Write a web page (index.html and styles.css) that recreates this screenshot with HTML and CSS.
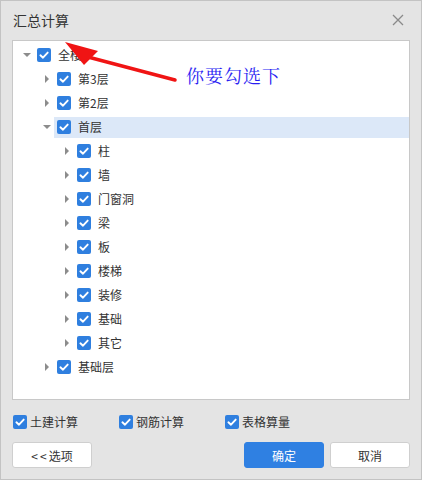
FILE: index.html
```html
<!DOCTYPE html>
<html lang="zh">
<head>
<meta charset="utf-8">
<title>汇总计算</title>
<link rel="stylesheet" href="styles.css">
</head>
<body>
<div class="dialog">
  <div class="header">
    <span class="title">汇总计算</span>
    <svg class="close" width="12" height="12" viewBox="0 0 12 12"><path d="M1 1 L11 11 M11 1 L1 11" stroke="#8a8a8a" stroke-width="1.3" fill="none"/></svg>
  </div>
  <div class="panel">
    <div class="row l0"><span class="tg down"></span><span class="node"><span class="cb"><svg viewBox="0 0 14 14"><path d="M3.4 7.3 L6 9.7 L10.7 4.6" /></svg></span><span class="lb">全楼</span></span></div>
    <div class="row l1"><span class="tg right"></span><span class="node"><span class="cb"><svg viewBox="0 0 14 14"><path d="M3.4 7.3 L6 9.7 L10.7 4.6" /></svg></span><span class="lb">第3层</span></span></div>
    <div class="row l1"><span class="tg right"></span><span class="node"><span class="cb"><svg viewBox="0 0 14 14"><path d="M3.4 7.3 L6 9.7 L10.7 4.6" /></svg></span><span class="lb">第2层</span></span></div>
    <div class="row l1"><span class="tg down"></span><span class="node selected"><span class="cb"><svg viewBox="0 0 14 14"><path d="M3.4 7.3 L6 9.7 L10.7 4.6" /></svg></span><span class="lb">首层</span></span></div>
    <div class="row l2"><span class="tg right"></span><span class="node"><span class="cb"><svg viewBox="0 0 14 14"><path d="M3.4 7.3 L6 9.7 L10.7 4.6" /></svg></span><span class="lb">柱</span></span></div>
    <div class="row l2"><span class="tg right"></span><span class="node"><span class="cb"><svg viewBox="0 0 14 14"><path d="M3.4 7.3 L6 9.7 L10.7 4.6" /></svg></span><span class="lb">墙</span></span></div>
    <div class="row l2"><span class="tg right"></span><span class="node"><span class="cb"><svg viewBox="0 0 14 14"><path d="M3.4 7.3 L6 9.7 L10.7 4.6" /></svg></span><span class="lb">门窗洞</span></span></div>
    <div class="row l2"><span class="tg right"></span><span class="node"><span class="cb"><svg viewBox="0 0 14 14"><path d="M3.4 7.3 L6 9.7 L10.7 4.6" /></svg></span><span class="lb">梁</span></span></div>
    <div class="row l2"><span class="tg right"></span><span class="node"><span class="cb"><svg viewBox="0 0 14 14"><path d="M3.4 7.3 L6 9.7 L10.7 4.6" /></svg></span><span class="lb">板</span></span></div>
    <div class="row l2"><span class="tg right"></span><span class="node"><span class="cb"><svg viewBox="0 0 14 14"><path d="M3.4 7.3 L6 9.7 L10.7 4.6" /></svg></span><span class="lb">楼梯</span></span></div>
    <div class="row l2"><span class="tg right"></span><span class="node"><span class="cb"><svg viewBox="0 0 14 14"><path d="M3.4 7.3 L6 9.7 L10.7 4.6" /></svg></span><span class="lb">装修</span></span></div>
    <div class="row l2"><span class="tg right"></span><span class="node"><span class="cb"><svg viewBox="0 0 14 14"><path d="M3.4 7.3 L6 9.7 L10.7 4.6" /></svg></span><span class="lb">基础</span></span></div>
    <div class="row l2"><span class="tg right"></span><span class="node"><span class="cb"><svg viewBox="0 0 14 14"><path d="M3.4 7.3 L6 9.7 L10.7 4.6" /></svg></span><span class="lb">其它</span></span></div>
    <div class="row l1"><span class="tg right"></span><span class="node"><span class="cb"><svg viewBox="0 0 14 14"><path d="M3.4 7.3 L6 9.7 L10.7 4.6" /></svg></span><span class="lb">基础层</span></span></div>
  </div>
  <div class="opts">
    <label class="opt"><span class="cb"><svg viewBox="0 0 14 14"><path d="M3.4 7.3 L6 9.7 L10.7 4.6" /></svg></span><span class="lb">土建计算</span></label>
    <label class="opt"><span class="cb"><svg viewBox="0 0 14 14"><path d="M3.4 7.3 L6 9.7 L10.7 4.6" /></svg></span><span class="lb">钢筋计算</span></label>
    <label class="opt"><span class="cb"><svg viewBox="0 0 14 14"><path d="M3.4 7.3 L6 9.7 L10.7 4.6" /></svg></span><span class="lb">表格算量</span></label>
  </div>
  <div class="buttons">
    <button class="btn"><span class="chev">&lt;&lt;</span>选项</button>
    <div class="right">
      <button class="btn primary">确定</button>
      <button class="btn">取消</button>
    </div>
  </div>
  <svg class="annot-arrow" width="422" height="100" viewBox="0 0 422 100">
    <line x1="88" y1="57" x2="175" y2="80" stroke="#f01414" stroke-width="3.5" stroke-linecap="round"/>
    <polygon points="65,42 98,51 84,65" fill="#f01414"/>
  </svg>
  <div class="annot-text">你要勾选下</div>
</div>
</body>
</html>
```
FILE: styles.css
```css
* { box-sizing: border-box; }
html, body { margin: 0; padding: 0; background: #e4e4e4; }
body {
  font-family: "Microsoft YaHei", "Noto Sans CJK SC", "Noto Sans", sans-serif;
  font-size: 12px;
  color: #333;
}
.dialog {
  position: relative;
  width: 422px;
  height: 480px;
  background: #e4e4e4;
  border: 1px solid #c3c3c3;
  padding: 0 11px;
  display: flex;
  flex-direction: column;
}
.header {
  height: 39px;
  display: flex;
  align-items: center;
  justify-content: space-between;
  padding-left: 1px;
}
.title {
  font-size: 14px;
  color: #333;
  line-height: 20px;
  margin-top: -2px;
}
.close { margin-right: 6px; margin-top: -1px; }
.panel {
  height: 360px;
  background: #fff;
  border: 1px solid #c8c8c8;
  padding-top: 2px;
  padding-left: 7px;
}
.row {
  height: 24px;
  display: flex;
  align-items: center;
}
.row.l1 { padding-left: 20px; }
.row.l2 { padding-left: 40px; }
.tg {
  width: 14px;
  height: 24px;
  flex: none;
  position: relative;
}
.tg::after {
  content: "";
  position: absolute;
  width: 0; height: 0;
}
.tg.right::after {
  left: 5px; top: 8px;
  border-left: 4px solid #8c8c8c;
  border-top: 4px solid transparent;
  border-bottom: 4px solid transparent;
}
.tg.down::after {
  left: 3px; top: 10px;
  border-top: 4px solid #8c8c8c;
  border-left: 4px solid transparent;
  border-right: 4px solid transparent;
}
.node {
  flex: 1;
  height: 21px;
  display: flex;
  align-items: center;
  padding-left: 3px;
}
.node.selected { background: #dce8f8; }
.cb {
  width: 14px;
  height: 14px;
  border-radius: 2px;
  background: #2f7fdf;
  display: inline-flex;
  flex: none;
}
.cb svg { width: 14px; height: 14px; }
.cb path { fill: none; stroke: #fff; stroke-width: 1.9; stroke-linecap: round; stroke-linejoin: round; }
.node .lb { margin-left: 7px; line-height: 16px; }
.opts {
  display: flex;
  margin-top: 15px;
  padding-left: 1px;
  height: 14px;
  align-items: center;
}
.opt {
  width: 106px;
  display: flex;
  align-items: center;
}
.opt .lb { margin-left: 3px; line-height: 14px; }
.buttons {
  margin-top: 13px;
  display: flex;
  justify-content: space-between;
}
.right { display: flex; gap: 6px; }
.btn {
  width: 80px;
  height: 26px;
  border: 1px solid #cfcfcf;
  border-radius: 3px;
  background: #fff;
  font-family: inherit;
  font-size: 12px;
  color: #333;
  padding: 0;
}
.chev { letter-spacing: 2px; }
.btn.primary {
  background: #2f80e2;
  border-color: #2f80e2;
  color: #fff;
}
.annot-arrow {
  position: absolute;
  left: -1px;
  top: -1px;
  pointer-events: none;
}
.annot-text {
  position: absolute;
  left: 185px;
  top: 63px;
  font-family: "Noto Serif CJK SC", "Noto Sans CJK SC", serif;
  font-size: 18px;
  line-height: 22px;
  color: #2a1ef2;
  letter-spacing: 1px;
}
```
